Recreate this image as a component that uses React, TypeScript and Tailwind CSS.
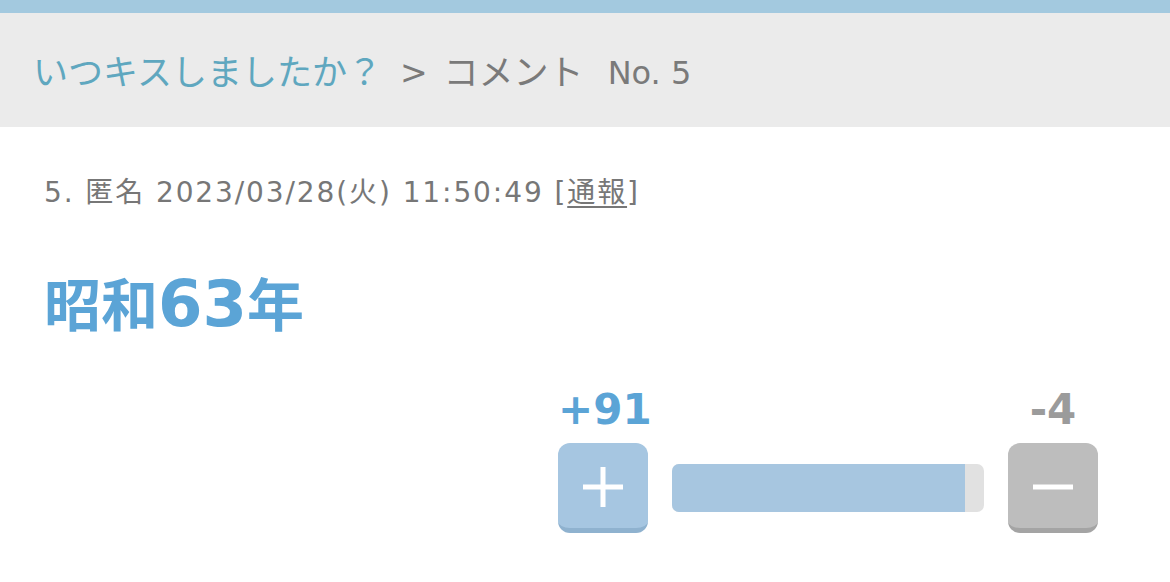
import React from "react";

const font = { fontFamily: '"DejaVu Sans", "Noto Sans CJK JP", sans-serif' };

function VoteButton({ kind }: { kind: "plus" | "minus" }) {
    const isPlus = kind === "plus";
    return (
        <button
            className={`flex w-[90px] h-[90px] items-center justify-center rounded-[12px] border-b-[5px] ${isPlus ? "bg-[#a6c6e1] border-[#8fb2cf]" : "bg-[#bdbdbd] border-[#a4a4a4]"}`}
        >
            <svg width="42" height="42" viewBox="0 0 42 42" className="mt-[2px]">
                <rect x="1" y="18.5" width="40" height="5" fill="white" />
                {isPlus && <rect x="18.5" y="1" width="5" height="40" fill="white" />}
            </svg>
        </button>
    );
}

export default function App() {
    const plus = 91;
    const minus = 4;

    return (
        <div className="w-[1170px] h-[582px] bg-white overflow-hidden" style={font}>
            <div className="h-[13px] bg-[#a3c9df]"></div>
            <div className="flex h-[114px] items-center pt-[6px] pl-[33px] bg-[#ebebeb] text-[35px] text-[#7a7a7a]">
                <a className="text-[#5fa7bf]">いつキスしましたか？</a>
                <span className="ml-[18px] text-[33px]">&gt;</span>
                <span className="ml-[16px]">コメント</span>
                <span className="ml-[24px] text-[32px]">No. 5</span>
            </div>

            <div className="px-[44px]">
                <p className="mt-[46px] h-[40px] leading-[40px] text-[28px] tracking-[1.9px] text-[#777]">
                    5. 匿名 2023/03/28(火) 11:50:49 [<span className="underline underline-offset-4">通報</span>]
                </p>

                <h1 className="mt-[56px] h-[70px] leading-[70px] text-[57px] font-bold text-[#5ba4d6]">
                    昭和<span className="text-[64px]">63</span>年
                </h1>
            </div>

            <div className="flex justify-end pr-[72px] mt-[49px]">
                <div className="flex flex-col w-[540px]">
                    <div className="flex justify-between h-[44px] leading-[44px] text-[42px] font-bold">
                        <span className="w-[90px] text-center whitespace-nowrap text-[#5ba4d6]">+{plus}</span>
                        <span className="w-[90px] text-center text-[#9b9b9b]">-{minus}</span>
                    </div>
                    <div className="flex items-center gap-[24px] mt-[11px]">
                        <VoteButton kind="plus" />
                        <div className="flex flex-1 h-[48px] rounded-[7px] overflow-hidden bg-[#e1e1e1]">
                            <div className="w-[94%] h-full bg-[#a7c6e0]"></div>
                        </div>
                        <VoteButton kind="minus" />
                    </div>
                </div>
            </div>
        </div>
    );
}
